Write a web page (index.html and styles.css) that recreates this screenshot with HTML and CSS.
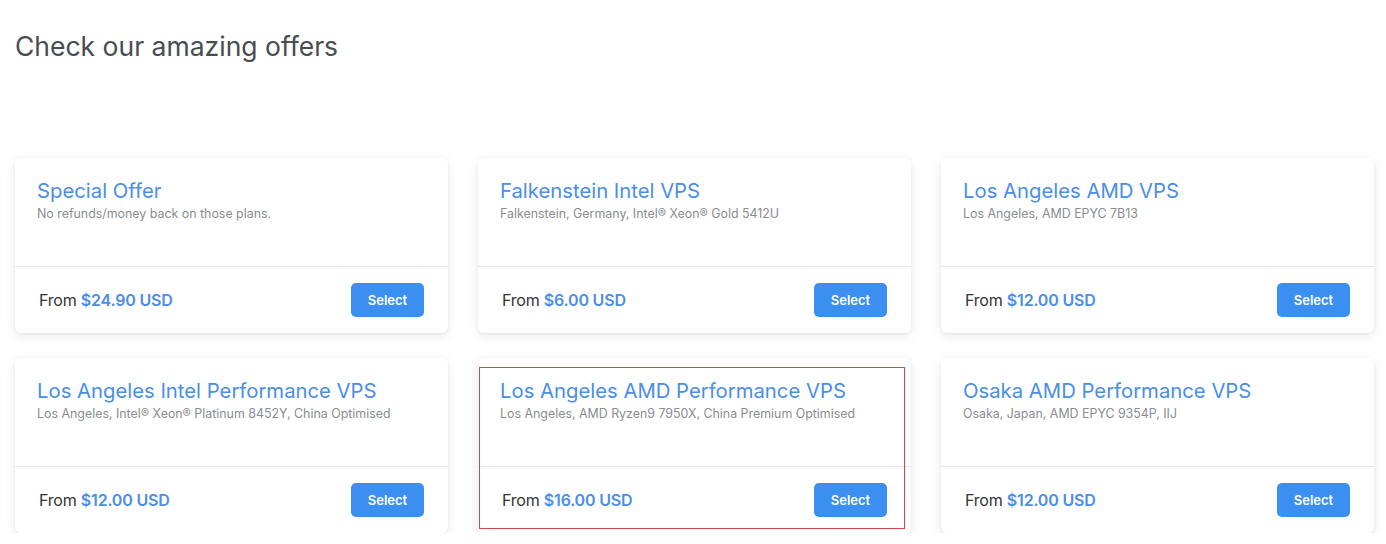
FILE: index.html
```html
<!DOCTYPE html>
<html>
<head>
<meta charset="utf-8">
<link rel="stylesheet" href="styles.css">
</head>
<body>
<main class="page">
  <h1 class="heading">Check our amazing offers</h1>
  <div class="grid">
    <div class="card">
      <div class="card-body">
        <h2 class="card-title">Special Offer</h2>
        <p class="card-desc">No refunds/money back on those plans.</p>
      </div>
      <div class="card-foot">
        <span class="price">From <strong>$24.90 USD</strong></span>
        <button class="btn">Select</button>
      </div>
    </div>
    <div class="card">
      <div class="card-body">
        <h2 class="card-title">Falkenstein Intel VPS</h2>
        <p class="card-desc">Falkenstein, Germany, Intel® Xeon® Gold 5412U</p>
      </div>
      <div class="card-foot">
        <span class="price">From <strong>$6.00 USD</strong></span>
        <button class="btn">Select</button>
      </div>
    </div>
    <div class="card">
      <div class="card-body">
        <h2 class="card-title">Los Angeles AMD VPS</h2>
        <p class="card-desc">Los Angeles, AMD EPYC 7B13</p>
      </div>
      <div class="card-foot">
        <span class="price">From <strong>$12.00 USD</strong></span>
        <button class="btn">Select</button>
      </div>
    </div>
    <div class="card">
      <div class="card-body">
        <h2 class="card-title">Los Angeles Intel Performance VPS</h2>
        <p class="card-desc">Los Angeles, Intel® Xeon® Platinum 8452Y, China Optimised</p>
      </div>
      <div class="card-foot">
        <span class="price">From <strong>$12.00 USD</strong></span>
        <button class="btn">Select</button>
      </div>
    </div>
    <div class="card card-marked">
      <div class="card-body">
        <h2 class="card-title">Los Angeles AMD Performance VPS</h2>
        <p class="card-desc">Los Angeles, AMD Ryzen9 7950X, China Premium Optimised</p>
      </div>
      <div class="card-foot">
        <span class="price">From <strong>$16.00 USD</strong></span>
        <button class="btn">Select</button>
      </div>
      <div class="mark"></div>
    </div>
    <div class="card">
      <div class="card-body">
        <h2 class="card-title">Osaka AMD Performance VPS</h2>
        <p class="card-desc">Osaka, Japan, AMD EPYC 9354P, IIJ</p>
      </div>
      <div class="card-foot">
        <span class="price">From <strong>$12.00 USD</strong></span>
        <button class="btn">Select</button>
      </div>
    </div>
  </div>
</main>
</body>
</html>
```

FILE: styles.css
```css
* { box-sizing: border-box; }
html, body { margin: 0; padding: 0; background: #fff; }
body {
  font-family: "Inter", "Open Sans", sans-serif;
  color: #333;
  overflow: hidden;
}
.page {
  padding: 28px 12px 0 15px;
}
.heading {
  margin: 0;
  font-size: 26.5px;
  font-weight: 400;
  line-height: 36px;
  color: #474c52;
  letter-spacing: 0;
}
.grid {
  margin-top: 94px;
  display: grid;
  grid-template-columns: repeat(3, 433px);
  column-gap: 30px;
  row-gap: 25px;
}
.card {
  position: relative;
  background: #fff;
  border-radius: 6px;
  box-shadow: 0 3px 12px rgba(0,0,0,0.09), 0 1px 3px rgba(0,0,0,0.05);
  height: 175px;
  display: flex;
  flex-direction: column;
}
.card-body {
  height: 109px;
  padding: 20px 22px 0 22px;
  border-bottom: 1px solid #e6e8ea;
}
.card-title {
  margin: 0;
  font-size: 20.3px;
  font-weight: 400;
  line-height: 26px;
  color: #4a8ee6;
  letter-spacing: 0;
}
.card-desc {
  margin: 0;
  font-size: 12.4px;
  line-height: 19px;
  color: #8a8d90;
}
.card-foot {
  flex: 1;
  display: flex;
  align-items: center;
  justify-content: space-between;
  padding: 0 24px 0 24px;
}
.price {
  font-size: 16px;
  color: #333;
  letter-spacing: -0.2px;
}
.price strong {
  font-weight: 600;
  color: #4a8ee6;
}
.btn {
  width: 73px;
  height: 34px;
  border: none;
  border-radius: 5px;
  background: #3a8ff0;
  color: #fff;
  font-family: inherit;
  font-size: 13px;
  font-weight: 600;
  padding: 0;
}
.mark {
  position: absolute;
  left: 1px;
  top: 9px;
  right: 6px;
  bottom: 4px;
  border: 1px solid #d04848;
  pointer-events: none;
}
```
